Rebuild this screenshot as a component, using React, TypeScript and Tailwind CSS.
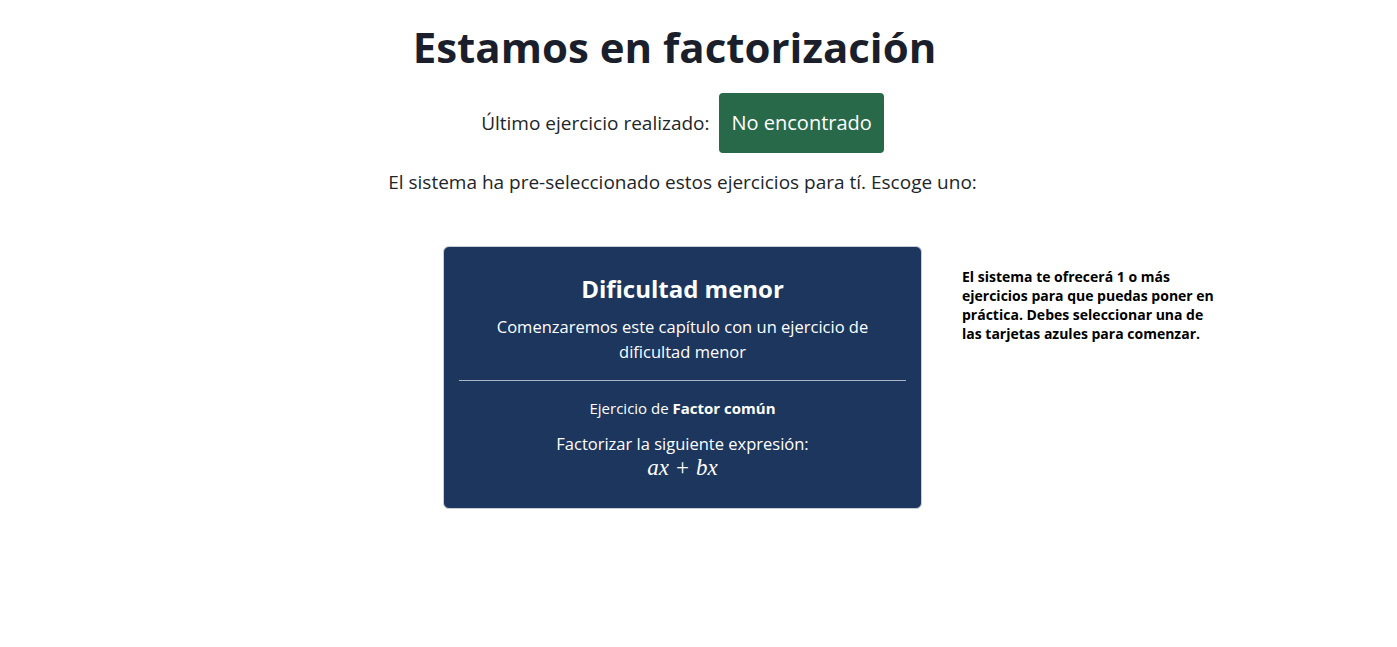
export default function App() {
  return (
    <div className="min-h-screen w-full bg-white pr-[32px] text-[#212529] font-['Open_Sans',sans-serif]">
      <div className="flex flex-col items-center">
        <h1 className="mr-[16px] mt-[22px] text-[42px] font-bold leading-[1.2] text-[#1a1f2b]">
          Estamos en factorización
        </h1>

        <div className="mt-[21px] flex items-center gap-[10px]">
          <span className="text-[19px]">Último ejercicio realizado:</span>
          <button className="h-[60px] rounded-[4px] bg-[#28694a] px-[12px] text-[20px] text-white">
            No encontrado
          </button>
        </div>

        <p className="mt-[15px] text-[19px] leading-[1.5]">
          El sistema ha pre-seleccionado estos ejercicios para tí. Escoge uno:
        </p>
      </div>

      <div className="mt-[49px] flex justify-center">
        <div className="relative">
          <div className="flex w-[479px] flex-col items-center rounded-[6px] border border-[#c9ced6] bg-[#1c365e] px-[15px] pb-[27px] pt-[28px] text-white">
            <h2 className="text-[24px] font-bold leading-[1.2]">Dificultad menor</h2>
            <p className="mt-[10px] px-[30px] text-center text-[16.5px] leading-[25px]">
              Comenzaremos este capítulo con un ejercicio de dificultad menor
            </p>
            <hr className="mt-[16px] w-full border-t border-[#aab4c4]" />
            <p className="mt-[16px] text-[15px] leading-[22px]">
              Ejercicio de <b>Factor común</b>
            </p>
            <p className="mt-[14px] text-[16.5px] leading-[22px]">Factorizar la siguiente expresión:</p>
            <p className="text-[23px] leading-[26px] font-['Liberation_Serif',serif]">
              <i>ax</i>
              <span className="mx-[7px]">+</span>
              <i>bx</i>
            </p>
          </div>
          <p className="absolute left-[519px] top-[21px] w-[262px] text-[14px] font-bold leading-[19px] text-black font-['Open_Sans',sans-serif]">
            El sistema te ofrecerá 1 o más ejercicios para que puedas poner en práctica. Debes seleccionar una de las tarjetas azules para comenzar.
          </p>
        </div>
      </div>
    </div>
  );
}
